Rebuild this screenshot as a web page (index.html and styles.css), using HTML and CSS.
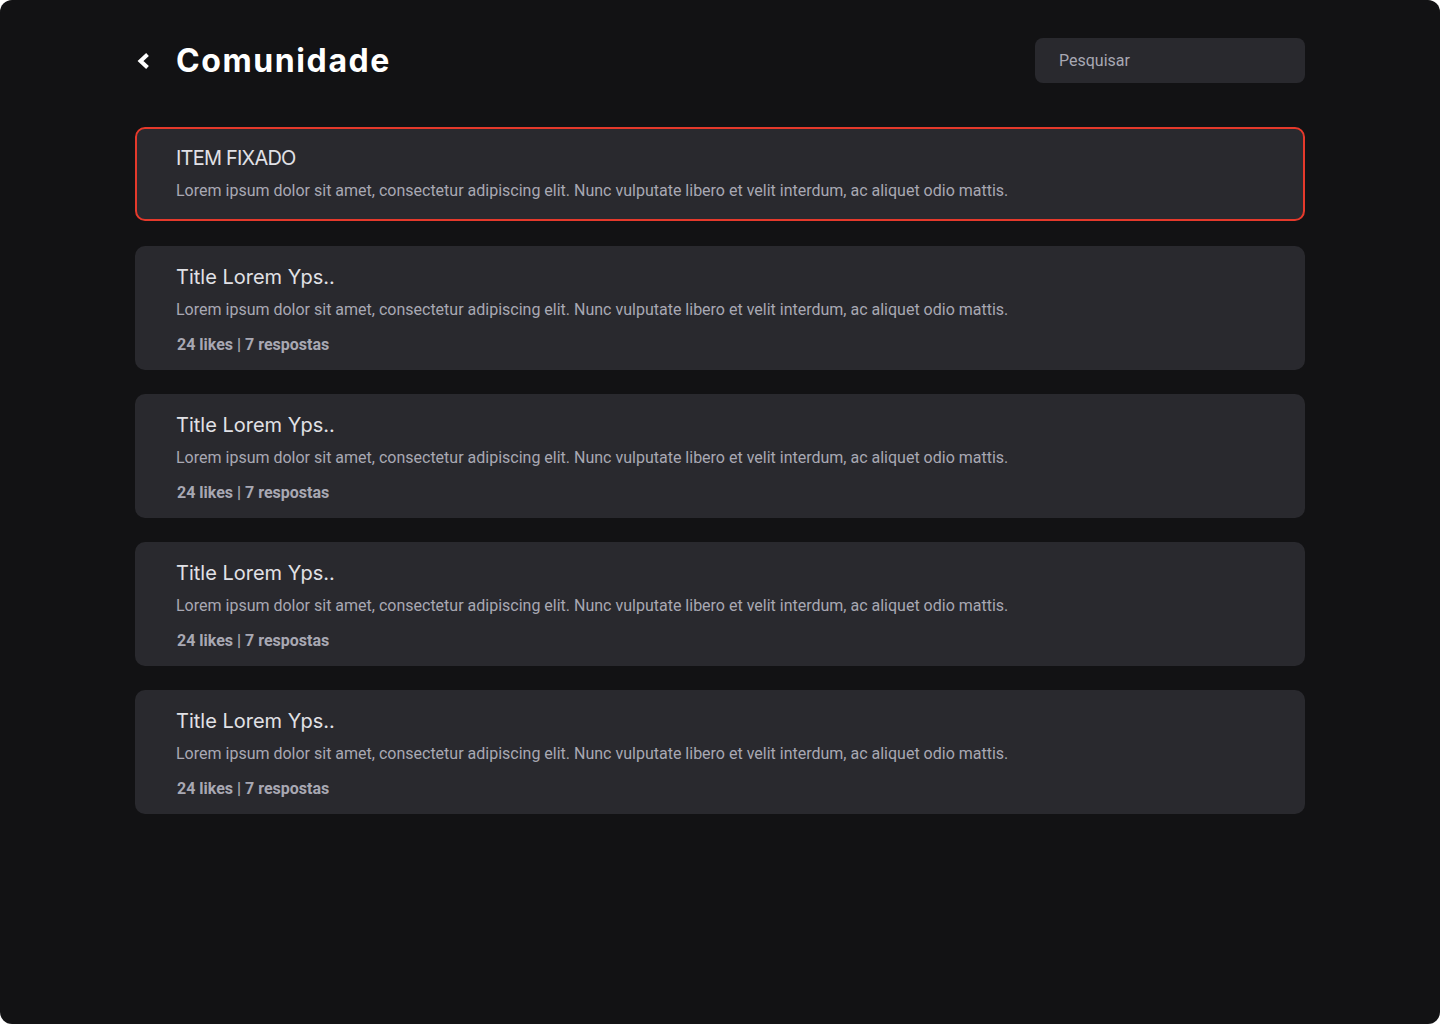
FILE: index.html
```html
<!DOCTYPE html>
<html lang="pt-BR">
<head>
<meta charset="utf-8">
<title>Comunidade</title>
<link rel="stylesheet" href="styles.css">
</head>
<body>
<div class="screen">
  <div class="container">
    <header class="header">
      <div class="header-left">
        <button class="back" aria-label="Voltar">
          <svg width="16" height="18" viewBox="0 0 16 18"><polyline points="12.5,2.5 5.5,9 12.5,15.5" fill="none" stroke="#ffffff" stroke-width="4" stroke-linecap="butt" stroke-linejoin="miter"/></svg>
        </button>
        <h1 class="title">Comunidade</h1>
      </div>
      <input class="search" type="text" placeholder="Pesquisar">
    </header>

    <div class="list">
      <article class="card pinned">
        <h2 class="card-title caps">ITEM FIXADO</h2>
        <p class="card-text">Lorem ipsum dolor sit amet, consectetur adipiscing elit. Nunc vulputate libero et velit interdum, ac aliquet odio mattis.</p>
      </article>
      <article class="card">
        <h2 class="card-title">Title Lorem Yps..</h2>
        <p class="card-text">Lorem ipsum dolor sit amet, consectetur adipiscing elit. Nunc vulputate libero et velit interdum, ac aliquet odio mattis.</p>
        <p class="card-meta">24 likes | 7 respostas</p>
      </article>
      <article class="card">
        <h2 class="card-title">Title Lorem Yps..</h2>
        <p class="card-text">Lorem ipsum dolor sit amet, consectetur adipiscing elit. Nunc vulputate libero et velit interdum, ac aliquet odio mattis.</p>
        <p class="card-meta">24 likes | 7 respostas</p>
      </article>
      <article class="card">
        <h2 class="card-title">Title Lorem Yps..</h2>
        <p class="card-text">Lorem ipsum dolor sit amet, consectetur adipiscing elit. Nunc vulputate libero et velit interdum, ac aliquet odio mattis.</p>
        <p class="card-meta">24 likes | 7 respostas</p>
      </article>
      <article class="card">
        <h2 class="card-title">Title Lorem Yps..</h2>
        <p class="card-text">Lorem ipsum dolor sit amet, consectetur adipiscing elit. Nunc vulputate libero et velit interdum, ac aliquet odio mattis.</p>
        <p class="card-meta">24 likes | 7 respostas</p>
      </article>
    </div>
  </div>
</div>
</body>
</html>
```

FILE: styles.css
```css
* { box-sizing: border-box; }
html, body { margin: 0; padding: 0; background: #ffffff; }
body { font-family: Roboto, "Liberation Sans", sans-serif; }

.screen {
  width: 1440px;
  height: 1024px;
  background: #121214;
  border-radius: 12px;
  overflow: hidden;
  padding-top: 38px;
}

.container {
  width: 1170px;
  margin: 0 auto;
}

.header {
  display: flex;
  align-items: center;
  justify-content: space-between;
  height: 45px;
}

.header-left {
  display: flex;
  align-items: center;
}

.back {
  background: none;
  border: 0;
  padding: 0;
  margin: 0;
  width: 41px;
  height: 24px;
  display: flex;
  align-items: center;
  cursor: pointer;
}

.title {
  margin: 0;
  font-family: Inter, "Noto Sans", sans-serif;
  font-weight: 700;
  font-size: 32px;
  line-height: 40px;
  color: #ffffff;
  letter-spacing: 1.6px;
}

.search {
  width: 270px;
  height: 45px;
  border: 0;
  border-radius: 8px;
  background: #29292e;
  padding: 0 24px;
  font-family: Roboto, sans-serif;
  font-size: 16px;
  color: #e1e1e6;
  outline: none;
}
.search::placeholder { color: #a8a8b3; }

.list {
  margin-top: 44px;
  display: flex;
  flex-direction: column;
  gap: 24px;
}

.card {
  background: #29292e;
  border-radius: 10px;
  padding: 16px 41px 13px;
}

.card.pinned {
  border: 2px solid #e5392b;
  padding: 14px 39px 16px;
  margin-bottom: 1px;
}

.card-title {
  margin: 0;
  font-family: Inter, "Noto Sans", sans-serif;
  font-weight: 400;
  font-size: 20px;
  line-height: 30px;
  color: #e1e1e6;
}

.card-title.caps {
  letter-spacing: -0.8px;
}

.card-text {
  margin: 6px 0 0;
  font-size: 16px;
  line-height: 24px;
  color: #a8a8b3;
}

.card-meta {
  margin: 11px 0 0 1px;
  font-size: 16px;
  line-height: 24px;
  font-weight: 700;
  color: #a8a8b3;
}
```
